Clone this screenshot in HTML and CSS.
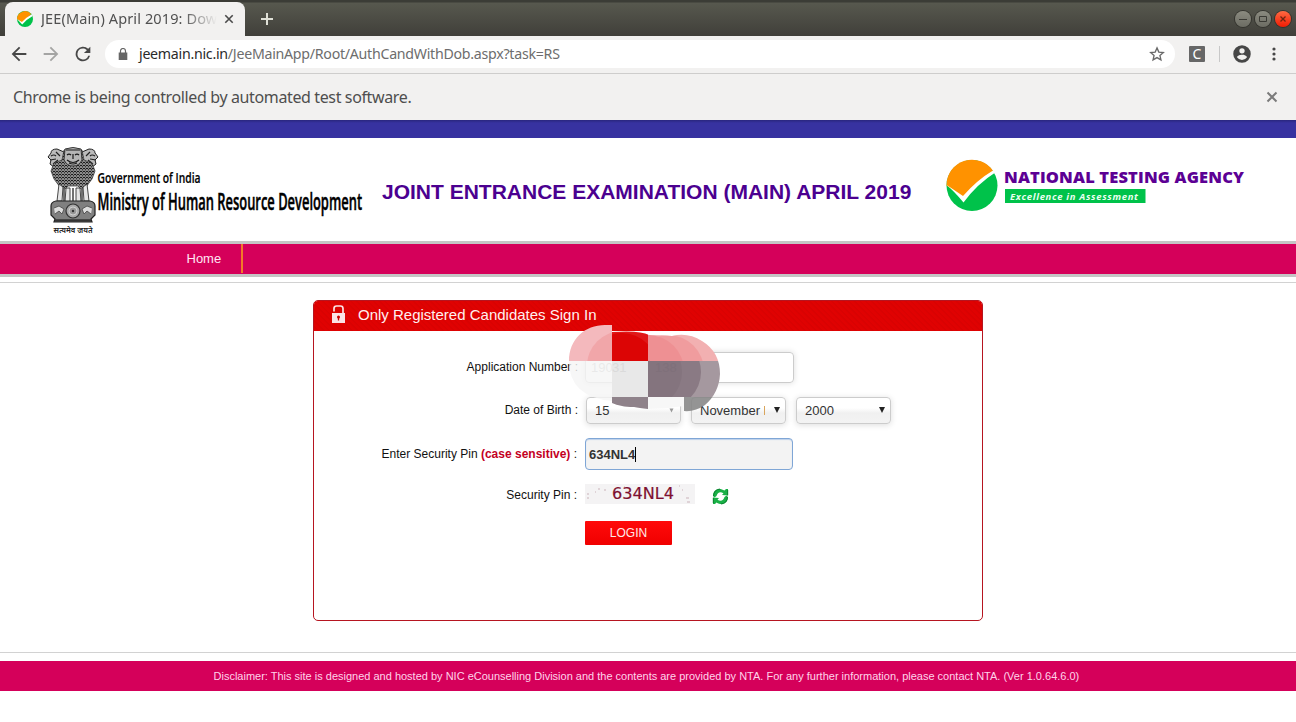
FILE: index.html
```html
<!DOCTYPE html>
<html lang="en">
<head>
<meta charset="utf-8">
<title>JEE(Main) April 2019</title>
<link rel="stylesheet" href="styles.css">
</head>
<body>
<div class="tabstrip">
  <div class="tab">
    <svg class="favicon" width="16" height="16" viewBox="0 0 52 52"><circle cx="26" cy="26" r="26" fill="#00c24a"/><path d="M0 26A26 26 0 0 1 46 10L17 39Z" fill="#ff9200"/><path d="M0 26L16 36Q30 20 47 11L51 16Q32 26 17 44Z" fill="#fff"/></svg>
    <span class="tab-title">JEE(Main) April 2019: Dow</span>
    <svg class="tab-close" width="10" height="10" viewBox="0 0 10 10"><path d="M1.3 1.3l7.4 7.4M8.7 1.3L1.3 8.7" stroke="#4a4a4a" stroke-width="1.6"/></svg>
  </div>
  <svg class="newtab" width="12" height="12" viewBox="0 0 12 12"><path d="M6 0v12M0 6h12" stroke="#dfe0d6" stroke-width="2"/></svg>
  <div class="winbtns">
    <span class="winbtn"><svg width="16" height="16" viewBox="0 0 16 16"><path d="M4 8.5h8" stroke="#3a3a34" stroke-width="1"/></svg></span>
    <span class="winbtn"><svg width="16" height="16" viewBox="0 0 16 16"><path d="M4.5 5.5h7v5h-7z" fill="none" stroke="#3a3a34"/></svg></span>
    <span class="winbtn winbtn-close"><svg width="16" height="16" viewBox="0 0 16 16"><path d="M5.500 5.500l5 5M10.500 5.500l-5 5" stroke="#6e2410" stroke-width="1.3"/></svg></span>
  </div>
</div>
<div class="toolbar">
  <svg class="nav-icon" width="22" height="22" viewBox="0 0 24 24"><path d="M20 11H7.830l5.590-5.590L12 4l-8 8 8 8 1.410-1.410L7.830 13H20z" fill="#474747"/></svg>
  <svg class="nav-icon" width="22" height="22" viewBox="0 0 24 24"><path d="M4 11h12.170l-5.590-5.590L12 4l8 8-8 8-1.410-1.410L16.170 13H4z" fill="#a4a4a3"/></svg>
  <svg class="nav-icon" width="22" height="22" viewBox="0 0 24 24"><path d="M17.650 6.350A8 8 0 1 0 19.730 14h-2.080A6 6 0 1 1 12 6c1.660 0 3.140.69 4.220 1.780L13 11h7V4z" fill="#474747"/></svg>
  <div class="omnibox">
    <svg width="10" height="13" viewBox="0 0 10 13"><path d="M.7 4.500h8.600v7.500H.7z" fill="#666"/><path d="M2.500 5V3a2.500 2.500 0 0 1 5 0v2" fill="none" stroke="#666" stroke-width="1.200"/></svg>
    <span class="url"><span class="host">jeemain.nic.in</span>/JeeMainApp/Root/AuthCandWithDob.aspx?task=RS</span>
    <svg class="star" width="16" height="16" viewBox="0 0 24 24"><path d="M12 2.800l2.700 6.300 6.800.6-5.100 4.500 1.500 6.700-5.900-3.500-5.900 3.500 1.500-6.700-5.100-4.500 6.800-.6z" fill="none" stroke="#696969" stroke-width="2"/></svg>
  </div>
  <span class="ext">C</span>
  <span class="tb-sep"></span>
  <svg class="avatar" width="20" height="20" viewBox="0 0 24 24"><path d="M12 1.500a10.500 10.500 0 1 0 0 21 10.500 10.500 0 0 0 0-21zm0 3.500a3.200 3.200 0 1 1 0 6.400A3.200 3.200 0 0 1 12 5zm0 14.200a7.200 7.200 0 0 1-6-3.220c.03-2 4-3.080 6-3.080s5.970 1.090 6 3.080a7.200 7.200 0 0 1-6 3.220z" fill="#474747"/></svg>
  <svg class="dots" width="4" height="14" viewBox="0 0 4 14"><circle cx="2" cy="2" r="1.600" fill="#474747"/><circle cx="2" cy="7" r="1.600" fill="#474747"/><circle cx="2" cy="12" r="1.600" fill="#474747"/></svg>
</div>
<div class="infobar">
  <span class="info-text">Chrome is being controlled by automated test software.</span>
  <svg width="12" height="12" viewBox="0 0 12 12"><path d="M1.500 1.500l9 9M10.500 1.500l-9 9" stroke="#7b7b7b" stroke-width="2"/></svg>
</div>
<div class="topband"></div>
<header class="site-header">
  <svg class="gov-logo" width="322" height="102" viewBox="44 138 322 102">
    <defs>
      <pattern id="fur" width="3" height="3" patternUnits="userSpaceOnUse"><rect width="3" height="3" fill="#8a8a8a"/><path d="M0 0l1.500 1.500L3 0" stroke="#1c1c1c" stroke-width="1" fill="none"/><circle cx="1.500" cy="2.700" r=".4" fill="#333"/></pattern>
    </defs>
    <path d="M57 149q-6 0-6 4l-3 4 3 3-1 4 5 4 8-2 1-14zM89 149q6 0 6 4l3 4-3 3 1 4-5 4-8-2-1-14z" fill="#bbb" stroke="#222" stroke-width="1"/>
    <path d="M51 156q3-2 5 0M50 160l6-1M53 164l5-4M56 152l4 4M95 156q-3-2-5 0M96 160l-6-1M93 164l-5-4M90 152l-4 4" stroke="#222" stroke-width="1.200" fill="none"/>
    <path d="M64 150q9-4 18 0l2 10 8 3 3 8-3 8-6 8-5 2-3-3h-10l-3 3-5-2-6-8-3-8 3-8 8-3z" fill="url(#fur)" stroke="#333" stroke-width=".7"/>
    <path d="M65 149q8-3 16 0l1 11q-3 6-9 6t-9-6z" fill="#b5b5b5" stroke="#2a2a2a" stroke-width=".9"/>
    <path d="M67 155q2-2 4 0M75 155q2-2 4 0M73 154v5M67 160q6 5 12 0M69 163q4 2 8 0M66 150h14" stroke="#1a1a1a" stroke-width="1.200" fill="none"/>
    <path d="M59 184l4 3-1 14h-5zM66 188h4v14h-5zM76 188h4l1 14h-5zM87 184l-4 3 1 14h5z" fill="#e6e6e6" stroke="#333" stroke-width=".9"/>
    <path d="M73 188v14M64 189v12M82 189v12" fill="none" stroke="#444" stroke-width="1.500"/>
    <path d="M56 201h34q5 1 5 5v9l-4 4 1 3H54l1-3-4-4v-9q0-4 5-5z" fill="#808080" stroke="#222" stroke-width="1.200"/>
    <path d="M54 208l5-2 5 3-2 5-3-3-4 3M92 208l-5-2-5 3 2 5 3-3 4 3" fill="#ddd" stroke="#444" stroke-width=".8"/>
    <circle cx="73" cy="211" r="7" fill="#aaa" stroke="#333" stroke-width="1.200"/><circle cx="73" cy="211" r="4" fill="#999" stroke="#ddd" stroke-width=".8"/><circle cx="73" cy="211" r="1.200" fill="#333"/>
    <path d="M55 220.500h36" stroke="#333" stroke-width="2.500"/>
    <text x="53.500" y="232.500" class="motto" textLength="39" lengthAdjust="spacingAndGlyphs">सत्यमेव जयते</text>
    <text x="97.500" y="182.500" class="gov1" textLength="103" lengthAdjust="spacingAndGlyphs">Government of India</text>
    <text x="97.500" y="209.500" class="gov2" textLength="264.500" lengthAdjust="spacingAndGlyphs">Ministry of Human Resource Development</text>
  </svg>
  <h1 class="exam">JOINT ENTRANCE EXAMINATION (MAIN) APRIL 2019</h1>
  <svg class="nta-logo" width="304" height="56" viewBox="946 158 304 56">
    <circle cx="972" cy="185.500" r="25.500" fill="#00c24a"/>
    <path d="M946.500 185.500A25.500 25.500 0 0 1 993.500 171.500L963 197Z" fill="#ff9200"/>
    <path d="M946 184.500L963 196Q977 180 993 170.500L996 172Q977 184 963.500 202.500Q954 191 946 184.500Z" fill="#fff"/>
    <text x="1004" y="183" class="nta-name" textLength="240">NATIONAL TESTING AGENCY</text>
    <rect x="1005" y="189" width="140.500" height="14" fill="#00c24a"/>
    <text x="1010" y="199.700" class="nta-sub" textLength="128">Excellence in Assessment</text>
  </svg>
</header>
<nav class="menu"><a class="menu-item">Home</a></nav>
<main class="content">
  <section class="panel">
    <div class="panel-head">
      <svg class="lock" width="14" height="19" viewBox="0 0 14 19"><path d="M0 8h13v10H0z" fill="#fbe3e6"/><path d="M2 6.500V3.500Q2 1 4.500 1H8.500Q11 1 11 3.500V8" fill="none" stroke="#fbe3e6" stroke-width="1.700"/><circle cx="6.500" cy="12" r="1.500" fill="#c00"/><path d="M6.500 12v3.500" stroke="#c00" stroke-width="1.300"/></svg>
      <span>Only Registered Candidates Sign In</span>
    </div>
    <div class="form">
      <div class="row row-app"><label class="label">Application Number :</label><div class="field field-app"><span>190</span></div></div>
      <div class="row row-dob"><label class="label">Date of Birth :</label>
        <div class="select"><span>15</span><i class="arrow arrow-faded"></i></div>
        <div class="select"><span class="month">November <i class="clipped"></i></span><i class="arrow"></i></div>
        <div class="select"><span>2000</span><i class="arrow"></i></div>
      </div>
      <div class="row row-pin"><label class="label">Enter Security Pin <b>(case sensitive)</b> :</label><div class="field field-pin"><span>634NL4</span><i class="caret"></i></div></div>
      <div class="row row-captcha"><label class="label">Security Pin :</label>
        <svg class="captcha" width="110" height="20" viewBox="0 0 110 20"><rect width="110" height="20" fill="#f4f3f4"/><path d="M2 10h2M2 14h2M13 5h2M19 6h2M94 2h1M101 14h3M102 18h3M97 6h1M39 3h1M10 8h1" stroke="#c9b4b9" stroke-width="1.200"/><text x="27" y="15" class="captcha-text" textLength="62" lengthAdjust="spacingAndGlyphs">634NL4</text></svg>
        <svg class="refresh" width="17" height="17" viewBox="0 0 17 17"><path d="M1 8C1 1.500 7-1 12.500 2.500L14 1h2v6.500L10 7l1.500-1.800C8 3.200 5.500 4.500 4.500 8L2.500 9.500Z" fill="#19b046"/><path d="M16 9c0 6.500-6 9-11.500 5.500L3 16H1V9.500l6 .5-1.500 1.800c3.500 2 6 .7 7-2.800l2-1.500Z" fill="#19b046"/><path d="M1.500 8Q2 1.500 8 1M15.500 9q-.5 6.500-6.500 7M15.700 2v5.300M1.300 15V9.800" stroke="#0a7a2c" stroke-width=".9" fill="none"/></svg>
      </div>
      <div class="row row-login"><span class="label"></span><button class="login">LOGIN</button></div>
    </div>
  </section>
</main>
<footer class="footer">Disclaimer: This site is designed and hosted by NIC eCounselling Division and the contents are provided by NTA. For any further information, please contact NTA. (Ver 1.0.64.6.0)</footer>

<svg class="redaction" width="160" height="96" viewBox="564 320 160 96">
  <defs>
    <clipPath id="blob"><path d="M569 361C569 339 585 325 605 325L612 325V332Q640 330 649 335Q662 335 672 336Q688 332 702 341Q720 352 720 374Q719 393 705 405Q695 412 684 411L684 408H648Q628 406 612 401Q569 397 569 361Z"/></clipPath>
    <clipPath id="leftTop"><rect x="564" y="320" width="48" height="41"/></clipPath>
    <clipPath id="midTop"><rect x="612" y="320" width="36" height="41"/></clipPath>
    <clipPath id="rightTop"><rect x="648" y="320" width="76" height="41"/></clipPath>
    <clipPath id="rightMid"><rect x="648" y="361" width="76" height="36"/></clipPath>
  </defs>
  <g clip-path="url(#blob)">
    <rect x="564" y="320" width="48" height="41" fill="#f4b9bd"/>
    <rect x="612" y="320" width="36" height="41" fill="#e01818"/>
    <circle cx="622" cy="368" r="35" fill="#dc0505" clip-path="url(#midTop)"/>
    <rect x="648" y="320" width="76" height="41" fill="#f2b0b1"/>
    <circle cx="622" cy="366" r="35" fill="#f1a6a9" clip-path="url(#leftTop)"/>
    <circle cx="668" cy="371" r="36" fill="#f09c9e" clip-path="url(#rightTop)"/>
    <circle cx="648" cy="371" r="36" fill="#ee9093" clip-path="url(#rightTop)"/>
    <rect x="564" y="361" width="48" height="50" fill="#f5f5f5" opacity=".8"/>
    <rect x="612" y="361" width="36" height="36" fill="#e8e8e8"/>
    <rect x="648" y="361" width="76" height="36" fill="#a5989f"/>
    <circle cx="665" cy="372" r="36" fill="#8a7a84" clip-path="url(#rightMid)"/>
    <circle cx="646" cy="372" r="36" fill="#84747e" clip-path="url(#rightMid)"/>
    <rect x="684" y="397" width="40" height="16" fill="#858585" opacity=".88"/>
    <text x="612" y="372" class="ghost-light">31</text>
    <text x="655" y="372" class="ghost-dark">138</text>
  </g>
  <path d="M648 397h36v9q-18 3-36 3z" fill="#f7f7f7"/>
  <path d="M669.500 408.500h4l-2 4z" fill="#999"/>
  <path d="M612 403v-6h36v12q-9-1-14-2-8 0-12-1-6-1-10-3z" fill="#8f828a"/>
</svg>
</body>
</html>
```
FILE: styles.css
```css
* { box-sizing: border-box; }
body { margin: 0; width: 1296px; height: 722px; overflow: hidden; background: #fff; font-family: "Liberation Sans", Arial, sans-serif; position: relative; }
svg { flex: none; display: block; }

.tabstrip { height: 36px; display: flex; align-items: center; padding: 2px 5px 0; background: linear-gradient(#3b3c36 0, #3b3c36 2px, #57584e 3px, #403f3a 36px); }
.tab { width: 240px; height: 34px; border-radius: 8px 8px 0 0; background: #f2f1f0; display: flex; align-items: center; padding-left: 12px; }
.tab-title { margin: -2px 0 0 8px; width: 176px; overflow: hidden; white-space: nowrap; font: 14.500px "Noto Sans", sans-serif; letter-spacing: 0.12px; color: #505050; mask-image: linear-gradient(90deg, #000 142px, transparent 176px); }
.tab-close { margin-left: 7px; }
.newtab { margin-left: 16px; }
.winbtns { margin-left: auto; display: flex; gap: 4px; }
.winbtn { width: 16px; height: 16px; border-radius: 50%; background: linear-gradient(#8b8b80, #6c6c63); box-shadow: 0 0 0 1px #34342e; }
.winbtn-close { background: linear-gradient(#ff6a42, #f01c04); }

.toolbar { height: 38px; display: flex; align-items: center; background: #f2f1f0; border-bottom: 1px solid #cecdcc; padding: 0 0 1px 8px; }
.nav-icon { margin-right: 10px; }
.omnibox { width: 1070px; height: 28px; margin-left: 1px; border-radius: 14px; background: #fff; display: flex; align-items: center; padding: 0 10px 0 13px; }
.url { margin: -1px 0 0 11px; font: 14.200px "Noto Sans", sans-serif; letter-spacing: -0.27px; color: #6d6d6d; white-space: nowrap; }
.host { color: #2a2a2a; }
.star { margin-left: auto; }
.ext { margin-left: 14px; width: 16px; height: 16px; border-radius: 1px; background: #676767; color: #fff; font: 14px/16px "Noto Sans", sans-serif; text-align: center; }
.tb-sep { width: 1px; height: 16px; margin-left: 14px; background: #c8c8c8; }
.avatar { margin-left: 12px; }
.dots { margin-left: 20px; }

.infobar { height: 46px; display: flex; align-items: center; justify-content: space-between; padding: 0 18px 0 13px; background: #f2f1f0; }
.info-text { font: 16px "Noto Sans", sans-serif; letter-spacing: -0.37px; color: #4e4e4e; white-space: nowrap; }
.topband { height: 18px; background: linear-gradient(#29267e, #3732a0 3px); }

.site-header { height: 103px; display: flex; padding-left: 44px; }
.motto { font: 600 8px "Noto Sans", sans-serif; fill: #222; }
.gov1 { font: 600 13.500px "Open Sans", sans-serif; fill: #000; stroke: #000; stroke-width: .2px; }
.gov2 { font: 600 23px "Open Sans", sans-serif; fill: #000; stroke: #000; stroke-width: .5px; }
.exam { margin: 42px 0 0 16px; width: 530px; font-size: 21px; line-height: 24px; color: #4b0090; white-space: nowrap; }
.nta-logo { margin: 20px 0 0 34px; }
.nta-name { font: 800 16.500px "Open Sans", "Noto Sans", sans-serif; fill: #5c0094; }
.nta-sub { font: italic bold 9.500px "Open Sans", sans-serif; fill: #e9fff0; }

.menu { height: 36px; border-top: 3px solid #c5c5c5; border-bottom: 3px solid #c5c5c5; background: #d5005a; display: flex; padding-left: 186px; }
.menu-item { width: 57px; height: 29px; border-right: 2px solid #f27a28; color: #ffe6f2; font-size: 13px; line-height: 29px; padding-left: .5px; }

.content { margin-top: 5px; height: 371px; border-top: 1px solid #d2d2d2; border-bottom: 1px solid #d2d2d2; padding-top: 17px; }
.panel { width: 670px; height: 321px; margin: 0 auto; border: 1px solid #b61520; border-radius: 5px; overflow: hidden; }
.panel-head { height: 30px; background: repeating-linear-gradient(45deg, #e00202 0, #e00202 2px, #d90202 3px, #d90202 4px); color: #fff0f0; font-size: 15px; line-height: 27px; display: flex; padding-left: 18px; }
.lock { margin: 4px 12px 0 0; }
.form { display: flex; flex-direction: column; }
.row { display: flex; align-items: center; }
.label { width: 264px; margin-right: 7px; padding-bottom: 2px; text-align: right; font-size: 12px; color: #111; white-space: nowrap; }
.label b { color: #c4001f; }
.row-app { height: 31px; margin-top: 21px; }
.row-dob { height: 27px; margin-top: 14px; gap: 10px; }
.row-dob .label { margin-right: -2px; }
.row-pin { height: 32px; margin-top: 14px; }
.row-pin .label, .row-captcha .label { width: 263px; margin-right: 8px; }
.row-pin .label { padding-bottom: 0; }
.row-captcha { height: 20px; margin-top: 14px; }
.row-captcha .label { padding: 2px 0 0; }
.row-login { height: 24px; margin-top: 17px; }
.field { border: 1px solid #ccc; border-radius: 4px; font-size: 13px; display: flex; align-items: center; }
.field-app { width: 209px; height: 31px; padding-left: 5px; color: #bbb; box-shadow: 0 0 6px #ddd; }
.field-pin { width: 208px; height: 32px; padding-left: 3px; border-color: #7fa6d6; background: #f3f3f3; font-weight: bold; color: #333; box-shadow: inset 0 1px 1px #bcd0ea; }
.caret { width: 1px; height: 15px; background: #000; }
.select { width: 95px; height: 27px; border: 1px solid #ccc; border-radius: 4px; background: linear-gradient(#fff 40%, #f0f0f0 60%, #f3f3f3); box-shadow: 0 1px 6px #ddd; font-size: 13px; color: #333; display: flex; align-items: center; justify-content: space-between; padding: 0 5px 0 8px; }
.month { display: flex; gap: 4px; align-items: center; width: 65px; white-space: nowrap; }
.clipped { width: 1px; height: 9px; background: #d9a55c; }
.arrow { border: 3.500px solid transparent; border-top: 6px solid #222; border-bottom: 0; margin-bottom: 2px; }
.arrow-faded { visibility: hidden; }
.captcha-text { font: 16px "DejaVu Sans", sans-serif; fill: #7e1030; stroke: #7e1030; stroke-width: .2px; }
.refresh { margin: 4px 0 0 17px; }
.login { width: 87px; height: 24px; border: 0; border-radius: 1px; padding: 0; background: linear-gradient(#ff0a0a, #f00000); color: #ffe9e9; font: 12px "Liberation Sans", sans-serif; }
.footer { margin-top: 8px; height: 30px; background: #d5005a; color: #ffd4ea; font-size: 11px; line-height: 30px; padding-left: 213.500px; white-space: nowrap; }
.redaction { position: absolute; left: 564px; top: 320px; }
.ghost-light { font: 13px "Liberation Sans", sans-serif; fill: #dadada; }
.ghost-dark { font: 13px "Liberation Sans", sans-serif; fill: #7f707a; }
```
